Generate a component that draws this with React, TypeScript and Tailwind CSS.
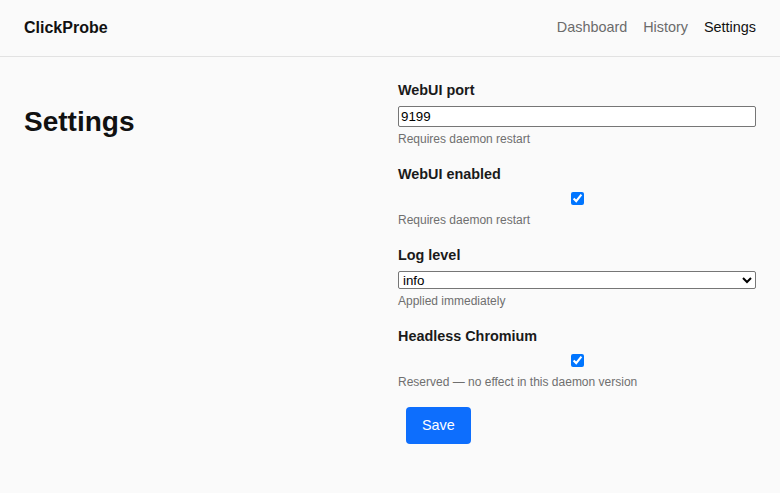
import { useState } from 'react';

const FONT = "font-['Liberation_Sans',Arial,Helvetica,sans-serif]";

function Field({ label, help, children, checkbox }: { label: string; help: string; children: React.ReactNode; checkbox?: boolean }) {
  return (
    <div className="mb-4">
      <label className="block text-[14.4px] leading-[21.6px] font-bold text-[#1a1a1a] mb-1">{label}</label>
      {checkbox ? <div className="flex justify-center py-[3px]">{children}</div> : children}
      <p className="mt-[3px] text-xs leading-[18px] text-[#6f6f6f]">{help}</p>
    </div>
  );
}

export default function App() {
  const [port, setPort] = useState('9199');
  const [webui, setWebui] = useState(true);
  const [level, setLevel] = useState('info');
  const [headless, setHeadless] = useState(true);

  return (
    <div className={`min-h-screen bg-[#fafafa] text-[#111] text-[14.4px] leading-[1.5] ${FONT}`}>
      {/* Header */}
      <header className="h-[57px] px-6 flex items-center justify-between border-b border-[#e2e2e2]">
        <span className="text-base font-bold text-[#111]">ClickProbe</span>
        <nav className="flex items-center gap-4 text-[14.4px]">
          <a className="text-[#6b6b6b]">Dashboard</a>
          <a className="text-[#6b6b6b]">History</a>
          <a className="text-[#111]">Settings</a>
        </nav>
      </header>

      <main className="px-6 pt-[23px] grid grid-cols-[1fr_358px] gap-6">
        <div>
          <h1 className="mt-[25px] text-[28px] leading-[1.2] font-bold text-[#111]">Settings</h1>
        </div>

        <form onSubmit={(e) => e.preventDefault()}>
          <Field label="WebUI port" help="Requires daemon restart">
            <input
              type="text"
              value={port}
              onChange={(e) => setPort(e.target.value)}
              className="block w-full h-[21px] px-[2px] bg-white border border-[#767676] rounded-[2px] text-[13.33px] leading-[15px] text-black font-['Liberation_Sans',Arial,sans-serif]"
            />
          </Field>

          <Field label="WebUI enabled" help="Requires daemon restart" checkbox>
            <input type="checkbox" checked={webui} onChange={(e) => setWebui(e.target.checked)} className="w-[13px] h-[13px]" />
          </Field>

          <Field label="Log level" help="Applied immediately">
            <select
              value={level}
              onChange={(e) => setLevel(e.target.value)}
              className="block w-full h-[18px] bg-white border border-[#767676] rounded-[2px] text-[13.33px] text-black font-['Liberation_Sans',Arial,sans-serif]"
            >
              <option value="debug">debug</option>
              <option value="info">info</option>
              <option value="warn">warn</option>
              <option value="error">error</option>
            </select>
          </Field>

          <Field label="Headless Chromium" help="Reserved — no effect in this daemon version" checkbox>
            <input type="checkbox" checked={headless} onChange={(e) => setHeadless(e.target.checked)} className="w-[13px] h-[13px]" />
          </Field>

          <button type="submit" className="ml-2 px-4 py-2 rounded-[4px] bg-[#0d6efd] text-white text-[14.4px] leading-[21px]">
            Save
          </button>
        </form>
      </main>
    </div>
  );
}
